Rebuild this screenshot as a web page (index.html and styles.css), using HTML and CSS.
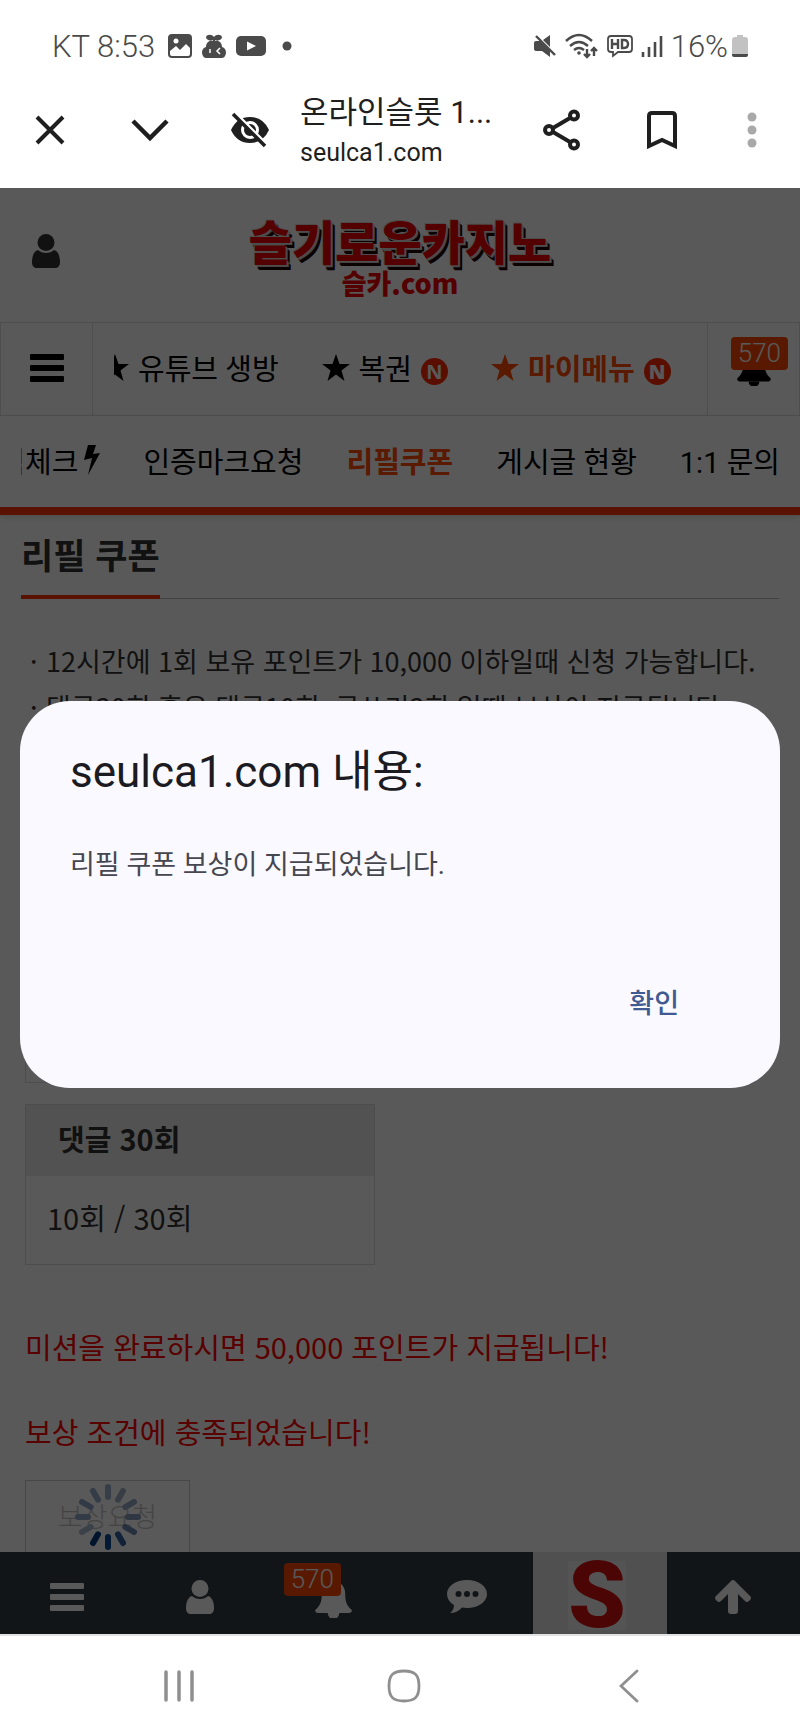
FILE: index.html
```html
<!DOCTYPE html>
<html lang="ko">
<head>
    <meta charset="UTF-8">
    <meta name="viewport" content="width=device-width, initial-scale=1.0">
    <title>리필 쿠폰</title>
    <link rel="stylesheet" href="styles.css">
</head>
<body>
    <svg class="sprites" aria-hidden="true">
        <symbol id="i-menu" viewBox="0 0 34 28">
            <rect width="34" height="6" rx="1"/><rect y="11" width="34" height="6" rx="1"/><rect y="22" width="34" height="6" rx="1"/>
        </symbol>
        <symbol id="i-user" viewBox="0 0 28 34">
            <circle cx="14" cy="8.500" r="8.500"/>
            <path d="M6 16C2 17 0 22 0 28c0 4 2 6 5 6h18c3 0 5-2 5-6 0-6-2-11-6-12-2 2-5 3-8 3s-6-1-8-3z"/>
        </symbol>
        <symbol id="i-bell" viewBox="0 0 38 40">
            <path d="M19 0c2 0 3 1 3 3 6 1 9 6 9 12 0 9 2 12 6 16 2 2 0 4-2 4H3c-2 0-4-2-2-4 4-4 6-7 6-16 0-6 3-11 9-12 0-2 1-3 3-3z"/>
            <path d="M13 35a6 6 0 0 0 12 0z"/>
        </symbol>
        <symbol id="i-star" viewBox="0 0 28 27">
            <path d="M14 0l3.500 10H28l-8.500 6.500L22.500 27 14 20.500 5.500 27l3-10.500L0 10h10.500z"/>
        </symbol>
    </svg>

    <div class="screen">
        <div class="status">
            <span>KT 8:53</span>
            <svg width="24" height="24" viewBox="0 0 24 24"><rect width="24" height="24" rx="4"/><circle cx="8" cy="7" r="2.500" fill="#fff"/><path d="M2 17l6-5 4 4 6-6 4 4v6q0 2-2 2H4q-2 0-2-2z" fill="#fff"/></svg>
            <svg class="robot" width="24" height="24" viewBox="0 0 24 24"><path d="M4 3C5 0 10 0 12 3c2-3 7-3 8 0 0 3-4 4-7 3v1c4-1 7 2 7 6 4 1 5 6 3 9-1 2-3 2-4 2H5c-1 0-3 0-4-2-2-3-1-8 3-9 0-4 3-7 7-6V6C8 7 4 6 4 3z"/><path d="M8 15v4M18 14l-3 3 3 3" fill="none" stroke="#fff" stroke-width="1.500"/></svg>
            <svg width="30" height="22" viewBox="0 0 30 22"><rect y="1" width="30" height="20" rx="5"/><path d="M11 6.500v9l9-4.500z" fill="#fff"/></svg>
            <svg class="dot" width="10" height="10" viewBox="0 0 10 10"><circle cx="5" cy="5" r="4.500"/></svg>
            <div class="status-right">
                <svg width="24" height="24" viewBox="0 0 24 24"><path d="M1 9q0-2 2-2h4l10 10v6l-8-6H3q-2 0-2-2zM10 6l7-5v12z"/><path d="M3 2l19 19" stroke="#4a4a4a" stroke-width="2.400"/></svg>
                <svg width="34" height="26" viewBox="0 0 34 26"><g fill="none" stroke="#4a4a4a" stroke-width="2.400"><path d="M1 8q13-12 26 0M5 13q9-8 18 0M9 17q5-4 10 0"/><path d="M22 16v8m-3-3l3 3 3-3M29 23v-8m-3 3l3-3 3 3"/></g><circle cx="14" cy="20" r="1.800"/></svg>
                <svg width="26" height="24" viewBox="0 0 26 24"><path d="M4 2h18q3 0 3 3v10q0 3-3 3H11l-5 4v-4H4q-3 0-3-3V5q0-3 3-3z" fill="none" stroke="#4a4a4a" stroke-width="1.800"/><path d="M5 5v10M11 5v10M5 10h6M15 6v8h2q4 0 4-4t-4-4z" fill="none" stroke="#4a4a4a" stroke-width="2.400"/></svg>
                <svg width="22" height="24" viewBox="0 0 22 24"><path d="M2 18v5M8 13v10M14 8v15M20 2v21" stroke="#4a4a4a" stroke-width="2.600"/></svg>
                <span>16%</span>
                <svg width="16" height="24" viewBox="0 0 16 24"><path d="M5 1h6v2h2q3 0 3 3v14H0V6q0-3 3-3h2z" fill="#c2c2c2"/><path d="M0 20h16v1q0 2-2 2H2q-2 0-2-2z"/></svg>
            </div>
        </div>

        <div class="toolbar">
            <button aria-label="닫기"><svg width="30" height="30" viewBox="0 0 30 30"><path d="M2 2l26 26M28 2L2 28" stroke="#1f1f1f" stroke-width="4"/></svg></button>
            <button aria-label="접기"><svg width="38" height="24" viewBox="0 0 38 24"><path d="M2 3l17 17L36 3" fill="none" stroke="#1f1f1f" stroke-width="4.500"/></svg></button>
            <button aria-label="추적 방지"><svg width="40" height="36" viewBox="0 0 40 36"><path d="M1 18Q7 5 20 5t19 13q-6 13-19 13T1 18z"/><circle cx="20" cy="18" r="7.500" fill="none" stroke="#fff" stroke-width="3"/><path d="M5 .500l32 32" stroke="#fff" stroke-width="3"/><path d="M3 2l32 32" stroke="#1f1f1f" stroke-width="3.500"/></svg></button>
            <div class="site">
                <p class="site-title">온라인슬롯 1...</p>
                <p class="site-url">seulca1.com</p>
            </div>
            <button aria-label="공유"><svg width="38" height="42" viewBox="0 0 38 42"><g fill="none" stroke="#1f1f1f" stroke-width="4"><circle cx="6" cy="21" r="4"/><circle cx="31" cy="6.500" r="4"/><circle cx="31" cy="35.500" r="4"/><path d="M10 19l17-10M10 23l17 10"/></g></svg></button>
            <button aria-label="북마크"><svg width="30" height="38" viewBox="0 0 30 38"><path d="M2 35V5q0-3 3-3h20q3 0 3 3v30l-13-6z" fill="none" stroke="#1f1f1f" stroke-width="4"/></svg></button>
            <button class="more" aria-label="더보기"><svg width="10" height="36" viewBox="0 0 10 36"><g fill="#a9a9a9"><circle cx="5" cy="5" r="4.500"/><circle cx="5" cy="18" r="4.500"/><circle cx="5" cy="31" r="4.500"/></g></svg></button>
        </div>

        <div class="page">
            <header class="header">
                <button class="login" aria-label="로그인"><svg width="28" height="34"><use href="#i-user"/></svg></button>
                <a class="logo" href="#">
                    <span class="logo-main">슬기로운카지노</span>
                    <span class="logo-sub">슬카.com</span>
                </a>
            </header>

            <nav class="nav">
                <button class="nav-btn" aria-label="전체메뉴"><svg width="34" height="28"><use href="#i-menu"/></svg></button>
                <div class="nav-scroll">
                    <div class="nav-list">
                        <a href="#"><svg width="28" height="27"><use href="#i-star"/></svg>유튜브 생방</a>
                        <a href="#"><svg width="28" height="27"><use href="#i-star"/></svg>복권<b class="new">N</b></a>
                        <a href="#" class="on"><svg width="28" height="27"><use href="#i-star"/></svg>마이메뉴<b class="new">N</b></a>
                    </div>
                </div>
                <button class="nav-btn nav-bell" aria-label="알림"><svg width="34" height="36"><use href="#i-bell"/></svg><span class="badge">570</span></button>
            </nav>

            <nav class="subnav">
                <div class="subnav-list">
                    <a href="#">출석체크<svg width="16" height="30" viewBox="0 0 16 30"><path d="M4 0h8L9 9l7-1L4 30l4-17-8 2z"/></svg></a>
                    <a href="#">인증마크요청</a>
                    <a href="#" class="on">리필쿠폰</a>
                    <a href="#">게시글 현황</a>
                    <a href="#">1:1 문의</a>
                </div>
            </nav>

            <main class="content">
                <div class="title"><h2>리필 쿠폰</h2></div>
                <ul class="notes">
                    <li>12시간에 1회 보유 포인트가 10,000 이하일때 신청 가능합니다.</li>
                    <li>댓글30회 혹은 댓글10회, 글쓰기3회 일때 보상이 지급됩니다.</li>
                </ul>
                <div class="missions">
                    <div class="card card-tall"></div>
                    <div class="card">
                        <h3>댓글 30회</h3>
                        <p>10회 / 30회</p>
                    </div>
                </div>
                <p class="alert">미션을 완료하시면 50,000 포인트가 지급됩니다!</p>
                <p class="alert">보상 조건에 충족되었습니다!</p>
                <button class="claim">보상요청
                    <svg class="spinner" width="70" height="70" viewBox="-35 -35 70 70">
                        <g stroke-width="6" stroke-linecap="round">
                            <path d="M0-20v-10" stroke="#9db2cc"/>
                            <path d="M0-20v-10" stroke="#a3b3c8" transform="rotate(30)"/>
                            <path d="M0-20v-10" stroke="#98aac4" transform="rotate(60)"/>
                            <path d="M0-20v-10" stroke="#899dbd" transform="rotate(90)"/>
                            <path d="M0-20v-10" stroke="#6f8ab5" transform="rotate(120)"/>
                            <path d="M0-20v-10" stroke="#315f9f" transform="rotate(150)"/>
                            <path d="M0-20v-10" stroke="#0a4a9a" transform="rotate(180)"/>
                            <path d="M0-20v-10" stroke="#003a80" transform="rotate(210)"/>
                            <path d="M0-20v-10" stroke="#a9bbd2" transform="rotate(240)"/>
                            <path d="M0-20v-10" stroke="#91a8c8" transform="rotate(270)"/>
                            <path d="M0-20v-10" stroke="#8ea6c8" transform="rotate(300)"/>
                            <path d="M0-20v-10" stroke="#94abca" transform="rotate(330)"/>
                        </g>
                    </svg>
                </button>
            </main>

            <nav class="bottom">
                <a href="#" aria-label="메뉴"><svg width="34" height="28"><use href="#i-menu"/></svg></a>
                <a href="#" aria-label="내정보"><svg width="28" height="34"><use href="#i-user"/></svg></a>
                <a href="#" class="bottom-bell" aria-label="알림"><svg width="37" height="39"><use href="#i-bell"/></svg><span class="badge">570</span></a>
                <a href="#" aria-label="채팅"><svg width="40" height="34" viewBox="0 0 40 34"><path d="M20 0c11 0 20 6 20 14s-9 14-20 14l-5-.500Q10 33 3 33q4-3 4-8-7-4-7-11C0 6 9 0 20 0z"/><g fill="#333c45"><circle cx="11.500" cy="14" r="3"/><circle cx="20" cy="14" r="3"/><circle cx="28.500" cy="14" r="3"/></g></svg></a>
                <a href="#" class="home"><span>S</span></a>
                <a href="#" aria-label="위로"><svg width="36" height="34" viewBox="0 0 36 34"><path d="M16 1q2-2 4 0l15 15q2 2 0 4l-1 1q-2 2-4 0l-7-7v17q0 3-3 3h-4q-3 0-3-3V14l-7 7q-2 2-4 0l-1-1q-2-2 0-4z"/></svg></a>
            </nav>

            <div class="overlay">
                <div class="dialog" role="alertdialog" aria-labelledby="dlg-title">
                    <h1 id="dlg-title">seulca1.com 내용:</h1>
                    <p>리필 쿠폰 보상이 지급되었습니다.</p>
                    <button>확인</button>
                </div>
            </div>
        </div>

        <div class="sysnav">
            <button aria-label="최근 앱"><svg width="30" height="32" viewBox="0 0 30 32"><path d="M2 2v28M15 2v28M28 2v28" stroke="#8f8f8f" stroke-width="3.500" stroke-linecap="round"/></svg></button>
            <button aria-label="홈"><svg width="34" height="34" viewBox="0 0 34 34"><path d="M17 2c11 0 15 4 15 15s-4 15-15 15S2 28 2 17 6 2 17 2z" fill="none" stroke="#8f8f8f" stroke-width="2.800"/></svg></button>
            <button aria-label="뒤로"><svg width="20" height="34" viewBox="0 0 20 34"><path d="M18 2L2 17l16 15" fill="none" stroke="#8f8f8f" stroke-width="2.800" stroke-linecap="round"/></svg></button>
        </div>
    </div>
</body>
</html>
```
FILE: styles.css
```css
* {
    box-sizing: border-box;
}

body {
    margin: 0;
    background: #fff;
    font-family: "Noto Sans CJK KR", sans-serif;
    font-size: 29px;
    color: #333;
}

h1, h2, h3, p, ul {
    margin: 0;
    padding: 0;
}

a {
    color: inherit;
    text-decoration: none;
}

button {
    border: none;
    background: none;
    padding: 0;
    font: inherit;
    color: inherit;
    cursor: pointer;
}

svg {
    display: block;
    flex: none;
}

.sprites {
    position: absolute;
    width: 0;
    height: 0;
}

.screen {
    display: flex;
    flex-direction: column;
    height: 100vh;
}

/* phone status bar */
.status {
    display: flex;
    align-items: center;
    gap: 10px;
    height: 80px;
    padding: 12px 52px 0;
    font-family: Roboto, sans-serif;
    font-size: 31px;
    font-weight: 300;
    color: #4a4a4a;
    fill: #4a4a4a;
}

.status > span {
    margin-right: 3px;
}

.status .dot {
    margin-left: 6px;
}

.status-right {
    display: flex;
    align-items: center;
    gap: 8px;
    margin-left: auto;
}

.status-right span {
    margin-right: -4px;
}

/* browser toolbar */
.toolbar {
    display: flex;
    align-items: center;
    height: 108px;
    padding-right: 8px;
    padding-bottom: 8px;
    fill: #1f1f1f;
}

.toolbar button {
    display: flex;
    align-items: center;
    justify-content: center;
    width: 100px;
    height: 100px;
}

.toolbar .more {
    width: 80px;
}

.site {
    flex: 1;
    min-width: 0;
    color: #1f1f1f;
    font-family: Roboto, "Noto Sans CJK KR", sans-serif;
    white-space: nowrap;
}

.site-title {
    font-size: 31px;
    line-height: 44px;
}

.site-url {
    padding-top: 2px;
    font-size: 25px;
    line-height: 32px;
}

/* web page */
.page {
    position: relative;
    display: flex;
    flex-direction: column;
    flex: 1;
    min-height: 0;
    background: #fff;
}

.header {
    display: grid;
    grid-template-columns: 92px 1fr 92px;
    align-items: center;
    height: 134px;
}

.login {
    display: flex;
    justify-content: center;
    padding-bottom: 8px;
    fill: #333;
}

.logo {
    display: flex;
    flex-direction: column;
    align-items: center;
    padding-top: 3px;
    color: #f00000;
    font-weight: 900;
}

.logo-main {
    font-size: 47px;
    line-height: 52px;
    text-shadow: 1px 1px 0 #ddd, -1px -1px 0 #ddd, 2px 2px 0 #ccc, 3px 4px 0 #200, 4px 5px 0 #200;
}

.logo-sub {
    font-size: 27px;
    line-height: 34px;
}

.nav {
    display: flex;
    height: 94px;
    border: 1px solid #e0e0e0;
    color: #000;
    fill: #000;
    font-family: Roboto, "Noto Sans CJK KR", sans-serif;
}

.nav-btn {
    display: flex;
    align-items: center;
    justify-content: center;
    width: 92px;
    padding-bottom: 2px;
    border-right: 1px solid #e0e0e0;
}

.nav-bell {
    position: relative;
    border-right: none;
    border-left: 1px solid #e0e0e0;
}

.nav-scroll {
    flex: 1;
    min-width: 0;
    margin: 0 13px 0 21px;
    overflow: hidden;
}

.nav-list,
.subnav-list {
    display: flex;
    align-items: center;
    gap: 43px;
    height: 100%;
    padding-bottom: 4px;
    white-space: nowrap;
}

.nav-list {
    margin-left: -13px;
}

.nav-list a,
.subnav-list a {
    display: flex;
    align-items: center;
    gap: 9px;
}

.nav .on,
.subnav .on {
    color: #ff4a00;
    fill: #ff4a00;
    font-weight: 700;
}

.new {
    width: 27px;
    height: 27px;
    margin-top: 9px;
    border-radius: 50%;
    background: #ff2a00;
    color: #fff;
    font-family: "Noto Sans", sans-serif;
    font-size: 20px;
    line-height: 27px;
    text-align: center;
}

.badge {
    position: absolute;
    padding: 0 7px;
    border-radius: 4px;
    background: #ff4800;
    color: #fff;
    font-family: Roboto, sans-serif;
    font-size: 26px;
    font-weight: 300;
    line-height: 33px;
}

.nav-bell .badge {
    top: 14px;
    right: 11px;
}

.subnav {
    height: 99px;
    padding: 0 20px 0 21px;
    border-bottom: 8px solid #ff3300;
    color: #000;
    font-family: Roboto, "Noto Sans CJK KR", sans-serif;
    box-shadow: 0 2px 6px rgba(0, 0, 0, 0.15);
}

.subnav-list {
    justify-content: flex-end;
    overflow: hidden;
}

.subnav-list a {
    gap: 6px;
}

.content {
    flex: 1;
    min-height: 0;
    overflow: hidden;
    padding: 15px 21px 0;
}

.title {
    display: flex;
    border-bottom: 1px solid #bbb;
}

.title h2 {
    margin-bottom: -1px;
    padding-bottom: 17px;
    border-bottom: 4px solid #ff3300;
    font-size: 35px;
    line-height: 48px;
}

.notes {
    padding: 39px 0 10px 9px;
    list-style: none;
}

.notes li {
    display: flex;
    font-size: 27px;
    line-height: 46px;
    white-space: nowrap;
}

.notes li::before {
    content: "·";
    flex: none;
    width: 16px;
}

.missions {
    display: grid;
    gap: 21px;
    width: 350px;
    margin: 0 4px 58px;
}

.card {
    border: 1px solid #ddd;
}

.card-tall {
    min-height: 343px;
}

.card h3 {
    padding: 0 32px 4px;
    background: #ebebeb;
    font-size: 29px;
    line-height: 67px;
}

.card p {
    padding: 18px 21px 23px;
    line-height: 47px;
}

.alert {
    margin: 0 4px 39px;
    color: #ff0000;
    line-height: 46px;
}

.claim {
    position: relative;
    width: 165px;
    height: 76px;
    margin: -17px 4px 0;
    padding-bottom: 4px;
    border: 1px solid #ccc;
    color: #c4c4c4;
    font-size: 27px;
    font-weight: 300;
}

.spinner {
    position: absolute;
    top: 1px;
    left: 47px;
}

.bottom {
    display: grid;
    grid-template-columns: repeat(6, 1fr);
    height: 82px;
    background: #333c45;
    fill: #fff;
}

.bottom a {
    display: flex;
    align-items: center;
    justify-content: center;
    padding-top: 8px;
}

.bottom .bottom-bell {
    position: relative;
    padding-top: 10px;
}

.bottom-bell .badge {
    top: 11px;
    left: 17px;
}

.bottom .home {
    padding: 4px 6px 0 0;
    background: #e6e6e6;
}

.home span {
    background: #efefef;
    color: #d81010;
    font-family: Roboto, sans-serif;
    font-size: 92px;
    font-weight: 900;
    line-height: 69px;
}

.overlay {
    position: absolute;
    inset: 0;
    display: flex;
    align-items: center;
    padding: 0 20px 34px;
    background: rgba(0, 0, 0, 0.65);
}

.dialog {
    display: flex;
    flex-direction: column;
    flex: 1;
    padding: 41px 50px 54px;
    border-radius: 50px;
    background: #faf9ff;
    font-family: Roboto, "Noto Sans CJK KR", sans-serif;
}

.dialog h1 {
    color: #1b1b21;
    font-size: 44px;
    font-weight: 400;
    line-height: 60px;
}

.dialog p {
    margin: 43px 0 85px;
    color: #46464f;
    font-size: 27px;
    line-height: 40px;
}

.dialog button {
    align-self: flex-end;
    height: 64px;
    margin-right: 23px;
    padding: 0 28px;
    color: #415a91;
    font-size: 27px;
    font-weight: 500;
}

/* phone navigation keys */
.sysnav {
    display: grid;
    grid-template-columns: repeat(3, 225px);
    justify-content: center;
    align-items: center;
    height: 100px;
    padding: 2px 0 0 7px;
    border-top: 2px solid #e2e2e2;
}

.sysnav button {
    display: flex;
    justify-content: center;
}
```
